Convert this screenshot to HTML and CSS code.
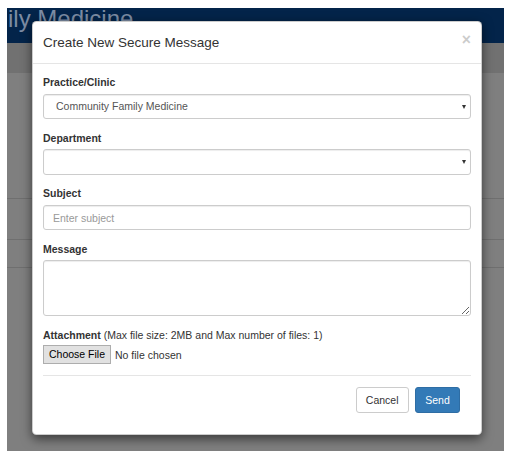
FILE: index.html
```html
<!DOCTYPE html>
<html lang="en">
<head>
<meta charset="utf-8">
<title>Create New Secure Message</title>
<link rel="stylesheet" href="styles.css">
</head>
<body>
<div class="screen">
  <div class="topbar"><span class="brand">ily Medicine</span></div>
  <div class="subbar"></div>
  <div class="page">
    <div class="block block-a"></div>
    <div class="block block-b"></div>
    <div class="block block-c"></div>
  </div>

  <div class="modal">
    <div class="modal-header">
      <button type="button" class="close">×</button>
      <h4 class="modal-title">Create New Secure Message</h4>
    </div>
    <form class="modal-body">
      <div class="form-group">
        <label class="control-label">Practice/Clinic</label>
        <div class="select-wrap">
          <select class="form-control select">
            <option>Community Family Medicine</option>
          </select>
        </div>
      </div>
      <div class="form-group">
        <label class="control-label">Department</label>
        <div class="select-wrap">
          <select class="form-control select">
            <option></option>
          </select>
        </div>
      </div>
      <div class="form-group">
        <label class="control-label">Subject</label>
        <input type="text" class="form-control" placeholder="Enter subject">
      </div>
      <div class="form-group">
        <label class="control-label">Message</label>
        <textarea class="form-control textarea"></textarea>
      </div>
      <div class="form-group attach">
        <label class="attach-label"><span class="strong">Attachment</span> (Max file size: 2MB and Max number of files: 1)</label>
        <input type="file" class="file">
      </div>
      <div class="modal-footer">
        <button type="button" class="btn btn-default">Cancel</button>
        <button type="button" class="btn btn-primary">Send</button>
      </div>
    </form>
  </div>
</div>
</body>
</html>
```

FILE: styles.css
```css
* { box-sizing: border-box; }

html, body {
  background: #ffffff;
}

body {
  margin: 8px 4px 9px 7px;
  font-family: "Liberation Sans", Arial, Helvetica, sans-serif;
  font-size: 10.5px;
  line-height: 15px;
  color: #333333;
}

.screen {
  position: relative;
  height: 443px;
  background: #7f7f7f;
  overflow: hidden;
}

.topbar {
  height: 35px;
  background: #03244a;
  overflow: hidden;
  white-space: nowrap;
}

.brand {
  display: inline-block;
  margin-left: 1px;
  font-size: 24px;
  line-height: 22px;
  color: #7d8ca3;
}

.subbar {
  height: 30px;
  background: #717171;
}

.block {
  border-bottom: 1px solid #6f6f6f;
}
.block-a { height: 126px; }
.block-b { height: 41px; }
.block-c { height: 28px; }

/* modal */
.modal {
  position: absolute;
  left: 25px;
  top: 13px;
  width: 450px;
  background: #ffffff;
  border: 1px solid rgba(0, 0, 0, 0.2);
  border-radius: 4.5px;
  box-shadow: 0 3.75px 11px rgba(0, 0, 0, 0.55);
}

.modal-header {
  padding: 11px 10px;
  border-bottom: 1px solid #e5e5e5;
}

.modal-title {
  margin: 0;
  font-size: 13.5px;
  line-height: 19px;
  font-weight: normal;
  color: #333333;
}

.close {
  float: right;
  margin-top: -1px;
  padding: 0;
  border: 0;
  background: transparent;
  font-family: "Liberation Sans", Arial, sans-serif;
  font-size: 15.75px;
  font-weight: bold;
  line-height: 1;
  color: #000000;
  opacity: 0.2;
  cursor: pointer;
}

.modal-body {
  display: block;
  margin: 0;
  padding: 11px 10px 10px;
}

.form-group {
  margin-bottom: 11.25px;
}

.control-label {
  display: block;
  margin-bottom: 3.75px;
  font-weight: bold;
  color: #333333;
}

.form-control {
  display: block;
  width: 100%;
  height: 25.5px;
  padding: 4.5px 9px;
  font-family: "Liberation Sans", Arial, sans-serif;
  font-size: 10.5px;
  line-height: 15px;
  color: #555555;
  background: #ffffff;
  border: 1px solid #cccccc;
  border-radius: 3px;
  box-shadow: inset 0 1px 1px rgba(0, 0, 0, 0.075);
  outline: none;
}

.form-control::placeholder {
  color: #999999;
}

.select-wrap {
  position: relative;
}

.select {
  -webkit-appearance: none;
  appearance: none;
  padding-left: 12px;
}

.select-wrap::after {
  content: "";
  position: absolute;
  right: 5px;
  top: 11px;
  border-top: 4px solid #333333;
  border-left: 2.5px solid transparent;
  border-right: 2.5px solid transparent;
  pointer-events: none;
}

.textarea {
  height: 56px;
  resize: vertical;
}

.attach-label {
  display: block;
  margin-bottom: 2px;
  color: #333333;
}

.strong {
  font-weight: bold;
}

.file {
  display: block;
  height: 19px;
  font-family: "Liberation Sans", Arial, sans-serif;
  font-size: 10.5px;
  color: #333333;
}

.file::file-selector-button {
  height: 19px;
  margin-right: 4px;
  padding: 0 5px;
  font-family: "Liberation Sans", Arial, sans-serif;
  font-size: 10.5px;
  color: #000000;
  background: #e1e1e1;
  border: 1px solid #adadad;
  border-radius: 0;
}

.modal-footer {
  padding: 11.25px;
  text-align: right;
  border-top: 1px solid #e5e5e5;
}

.btn {
  display: inline-block;
  height: 25.5px;
  padding: 4.5px 9px;
  font-family: "Liberation Sans", Arial, sans-serif;
  font-size: 10.5px;
  line-height: 15px;
  border: 1px solid transparent;
  border-radius: 3px;
  cursor: pointer;
  vertical-align: middle;
}

.btn + .btn {
  margin-left: 3.75px;
}

.btn-default {
  color: #333333;
  background: #ffffff;
  border-color: #cccccc;
}

.btn-primary {
  color: #ffffff;
  background: #337ab7;
  border-color: #2e6da4;
}
```
